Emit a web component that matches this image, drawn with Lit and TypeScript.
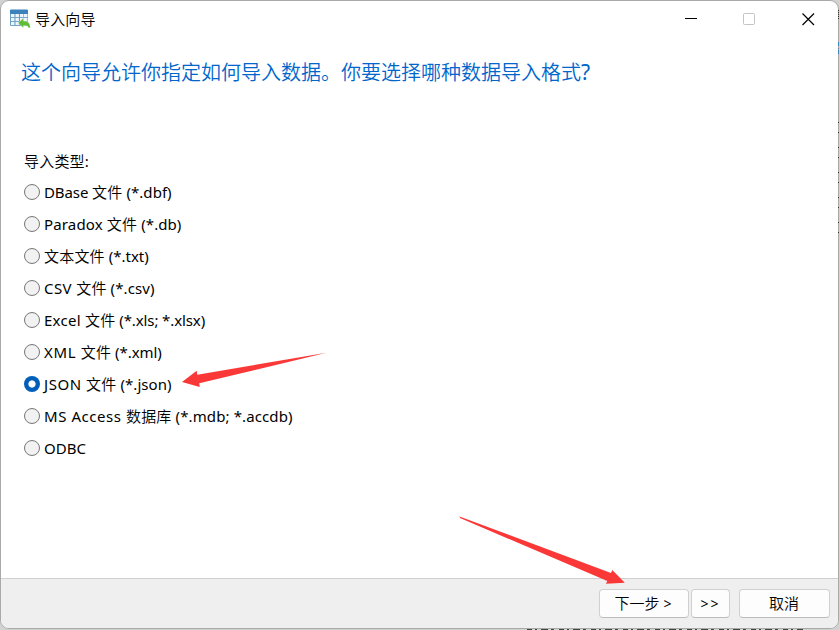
import { LitElement, html, css, svg } from "lit";
import { customElement, state } from "lit/decorators.js";

interface Format { head: string; cjk: string; tail: string; headGap: number; tailGap: number; }

const FORMATS: Format[] = [
  { head: "DBase ", cjk: "文件", tail: " (*.dbf)", headGap: -0.1, tailGap: 0.05 },
  { head: "Paradox ", cjk: "文件", tail: " (*.db)", headGap: 0.15, tailGap: 0.08 },
  { head: "", cjk: "文本文件", tail: " (*.txt)", headGap: 0, tailGap: 0 },
  { head: "CSV ", cjk: "文件", tail: " (*.csv)", headGap: 0.4, tailGap: 0.08 },
  { head: "Excel ", cjk: "文件", tail: " (*.xls; *.xlsx)", headGap: 0.28, tailGap: -0.11 },
  { head: "XML ", cjk: "文件", tail: " (*.xml)", headGap: 0.65, tailGap: -0.05 },
  { head: "JSON ", cjk: "文件", tail: " (*.json)", headGap: 0.55, tailGap: 0.05 },
  { head: "MS Access ", cjk: "数据库", tail: " (*.mdb; *.accdb)", headGap: 0.55, tailGap: 0.11 },
  { head: "ODBC", cjk: "", tail: "", headGap: 0, tailGap: 0 },
];

@customElement("app-root")
export class AppRoot extends LitElement {
  @state() private selected = 6;

  static styles = css`
    :host { display: block; position: relative; width: 839px; height: 630px; overflow: hidden; background: #d2d2d2;
      font-family: "Noto Sans", "Noto Sans CJK SC", sans-serif; font-size: 15px; color: #000; }
    * { box-sizing: border-box; }
    .window { display: flex; flex-direction: column; height: 629px; border: 1px solid #a9a9a9; border-radius: 9px; background: #fff; overflow: hidden; }
    .titlebar { display: flex; align-items: center; height: 36px; padding-left: 8px; flex: none; }
    .app-icon { width: 22px; height: 20px; flex: none; }
    .title { margin-left: 4px; line-height: 20px; flex: 1; letter-spacing: 0.15px; font-weight: 350; }
    .controls { display: flex; gap: 46px; padding-right: 23px; }
    .controls svg { width: 13px; height: 13px; display: block; }
    .main { flex: 1; display: flex; flex-direction: column; }
    .heading { margin: 21px 0 0 20px; font-size: 20px; line-height: 30px; font-weight: 350; color: #0066cc; white-space: nowrap; }
    .mark { font-weight: 400; font-size: 21px; line-height: 1; }
    .label { margin: 61px 0 0 23px; line-height: 24px; letter-spacing: 0.2px; font-weight: 350; }
    .label .colon { font-weight: 400; }
    .list { display: flex; flex-direction: column; margin: 3px 0 0 23px; }
    .item { display: flex; align-items: center; gap: 4px; height: 32px; white-space: nowrap; }
    .name { padding-bottom: 2px; white-space: pre; }
    .cjk { font-weight: 350; letter-spacing: 0.2px; }
    .item:last-child .name { padding-bottom: 0; }
    .radio { width: 16px; height: 16px; border: 1px solid #767676; border-radius: 50%; background: #f2f2f2; flex: none; }
    .radio.on { border: 0; background: radial-gradient(circle, #fff 3.2px, #005fb8 4px); }
    .footer { display: flex; align-items: flex-start; justify-content: flex-end; height: 50px; flex: none; border-top: 1px solid #d0d0d0; background: #efefef; padding: 10px 8px 0 0; }
    .btn { height: 29px; border: 1px solid #d0d0d0; border-bottom-color: #bcbcbc; border-radius: 4px; background: #fdfdfd; padding: 0 0 1px; font: inherit; font-weight: 350; color: #000; line-height: 26px; white-space: nowrap; }
    .next { width: 90px; padding-right: 2px; }
    .skip { width: 39px; margin-left: 2px; letter-spacing: 2px; }
    .cancel { width: 91px; margin-left: 9px; padding-right: 1px; }
    .gt { font-size: 14px; font-weight: 400; }
    .arrows { position: absolute; inset: 0; width: 839px; height: 630px; pointer-events: none; }
  `;

  render() {
    return html`
      <div class="window">
        <div class="titlebar">
          <svg class="app-icon" viewBox="0 0 22 20">
            <rect x="1" y="1" width="18" height="16" rx="1" fill="#6a9fc9"/>
            <rect x="1" y="0.5" width="18" height="4.5" rx="1" fill="#3b82bd"/>
            ${[5, 9, 13].map(y => [2, 6.5, 11, 15].map(x => svg`<rect x=${x} y=${y} width="3.4" height="3.1" fill="#eef6fc"/>`))}
            <path d="M9 14 14.5 9V12c4.8 0 6.8 2.3 6.8 7h-1.6c-.8-1.8-2.2-2.4-5.2-2.4V19Z" fill="#60bd33" stroke="#fff" stroke-width=".4"/>
          </svg>
          <span class="title">导入向导</span>
          <div class="controls">
            <svg viewBox="0 0 13 13"><path d="M1 5.5H13" stroke="#000"/></svg>
            <svg viewBox="0 0 13 13"><rect x=".5" y=".5" width="11" height="11" rx="1" fill="none" stroke="#c4c4c4"/></svg>
            <svg viewBox="0 0 13 13"><path d="M.5.5 12 12M12 .5.5 12" stroke="#000" stroke-width="1.2"/></svg>
          </div>
        </div>
        <div class="main">
          <h1 class="heading">这个向导允许你指定如何导入数据。你要选择哪种数据导入格式<span class="mark">?</span></h1>
          <div class="label">导入类型<span class="colon">:</span></div>
          <div class="list" role="radiogroup">
            ${FORMATS.map((f, i) => html`
              <div class="item" role="radio" aria-checked=${i === this.selected} @click=${() => (this.selected = i)}>
                <span class="radio ${i === this.selected ? "on" : ""}"></span>
                <span class="name"><span style="letter-spacing:${f.headGap}px">${f.head}</span><span class="cjk">${f.cjk}</span><span style="letter-spacing:${f.tailGap}px">${f.tail}</span></span>
              </div>`)}
          </div>
        </div>
        <div class="footer">
          <button class="btn next">下一步 <span class="gt">&gt;</span></button>
          <button class="btn skip"><span class="gt">&gt;&gt;</span></button>
          <button class="btn cancel">取消</button>
        </div>
      </div>
      <svg class="arrows" viewBox="0 0 839 630">
        <path d="M527 629.5H803" stroke="#444" stroke-dasharray="5 3 2 4 7 3 3 5"/>
        <path d="M838.5 122V235" stroke="#333" stroke-dasharray="1 9 1 14"/>
        <path d="M838.5 10V20" stroke="#333" stroke-dasharray="1 1"/>
        <path d="M838.5 42V56" stroke="#3988bd" stroke-dasharray="4 2 1 1"/>
        <path d="M326.5 352.8 197.3 374.7 196.7 370.7 182 382 199.7 387 199.3 383.3Z" fill="#fb3838"/>
        <path d="M459.5 516.5 460 518 607.3 581 606 583.8 624.8 582.7 612.3 570 611 573Z" fill="#fb3838"/>
      </svg>`;
  }
}
